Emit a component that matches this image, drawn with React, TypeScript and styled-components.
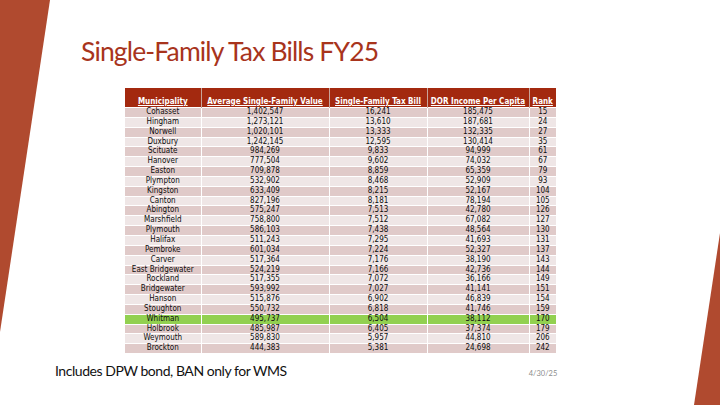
import React from "react";
import styled, { createGlobalStyle } from "styled-components";

const Global = createGlobalStyle`
  html, body { margin: 0; padding: 0; background: #ffffff; }
  body { width: 720px; height: 405px; overflow: hidden; }
`;

const Slide = styled.div`
  position: relative;
  width: 720px;
  height: 405px;
  background: #ffffff;
  overflow: hidden;
  font-family: "Lato", "Open Sans", sans-serif;
`;

const Deco = styled.svg`
  position: absolute;
  left: 0;
  top: 0;
  width: 720px;
  height: 405px;
  pointer-events: none;
`;

const Content = styled.div`
  position: relative;
  display: flex;
  flex-direction: column;
  padding: 35px 0 0 0;
  height: 100%;
  box-sizing: border-box;
`;

const Title = styled.h1`
  margin: 0 0 0 81px;
  font-family: "Lato", sans-serif;
  font-weight: 400;
  font-size: 26.5px;
  line-height: 33px;
  color: #a8341c;
  letter-spacing: -0.85px;
`;

const TableWrap = styled.div`
  margin: 20px 0 0 125px;
`;

const Table = styled.table`
  border-collapse: collapse;
  table-layout: fixed;
  width: 431px;
  font-family: "DejaVu Sans Condensed", "DejaVu Sans", sans-serif;
  font-size: 8px;
  color: #0d0d0d;
`;

const Th = styled.th`
  background: #a3290f;
  color: #ffffff;
  font-weight: 700;
  font-size: 8px;
  text-decoration: underline;
  text-underline-offset: 1px;
  height: 18px;
  padding: 0 0 1px 0;
  vertical-align: bottom;
  line-height: 8px;
  border-left: 1px solid #c9a49a;
  white-space: nowrap;
  overflow: visible;
  &:first-child { border-left: none; }
`;

const Tr = styled.tr<{ $shade: "dark" | "light" | "green" }>`
  background: ${(p) =>
    p.$shade === "green" ? "#92d050" : p.$shade === "dark" ? "#e0cac9" : "#efe6e6"};
`;

const Td = styled.td`
  height: 8.84px;
  padding: 0;
  line-height: 8.84px;
  text-align: center;
  border-top: 1px solid #ffffff;
  border-left: 1px solid #ffffff;
  white-space: nowrap;
  &:first-child { border-left: none; }
`;

const Footer = styled.div`
  display: flex;
  align-items: baseline;
  margin-top: auto;
  padding: 0 0 26px 55px;
`;

const Note = styled.div`
  font-family: "Lato", sans-serif;
  font-size: 14px;
  letter-spacing: -0.45px;
  color: #111111;
`;

const DateText = styled.div`
  margin-left: 242px;
  font-family: "Lato", sans-serif;
  font-size: 7.5px;
  color: #8c8c8c;
`;

const rows: [string, string, string, string, string][] = [
  ["Cohasset", "1,402,547", "16,241", "185,475", "15"],
  ["Hingham", "1,273,121", "13,610", "187,681", "24"],
  ["Norwell", "1,020,101", "13,333", "132,335", "27"],
  ["Duxbury", "1,242,145", "12,595", "130,414", "35"],
  ["Scituate", "984,269", "9,833", "94,999", "61"],
  ["Hanover", "777,504", "9,602", "74,032", "67"],
  ["Easton", "709,878", "8,859", "65,359", "79"],
  ["Plympton", "532,902", "8,468", "52,909", "93"],
  ["Kingston", "633,409", "8,215", "52,167", "104"],
  ["Canton", "827,196", "8,181", "78,194", "105"],
  ["Abington", "575,247", "7,513", "42,780", "126"],
  ["Marshfield", "758,800", "7,512", "67,082", "127"],
  ["Plymouth", "586,103", "7,438", "48,564", "130"],
  ["Halifax", "511,243", "7,295", "41,693", "131"],
  ["Pembroke", "601,034", "7,224", "52,327", "137"],
  ["Carver", "517,364", "7,176", "38,190", "143"],
  ["East Bridgewater", "524,219", "7,166", "42,736", "144"],
  ["Rockland", "517,355", "7,072", "36,166", "149"],
  ["Bridgewater", "593,992", "7,027", "41,141", "151"],
  ["Hanson", "515,876", "6,902", "46,839", "154"],
  ["Stoughton", "550,732", "6,818", "41,746", "159"],
  ["Whitman", "495,737", "6,504", "38,112", "170"],
  ["Holbrook", "485,987", "6,405", "37,374", "179"],
  ["Weymouth", "589,830", "5,957", "44,810", "206"],
  ["Brockton", "444,383", "5,381", "24,698", "242"],
];

const widths = [76, 128, 98, 102, 27];
const headers = [
  "Municipality",
  "Average Single-Family Value",
  "Single-Family Tax Bill",
  "DOR Income Per Capita",
  "Rank",
];

export default function App() {
  return (
    <Slide>
      <Global />
      <Deco viewBox="0 0 720 405">
        <polygon points="0,0 50,0 0,332" fill="#b04a2f" />
        <polygon points="720,233 720,405 694,405" fill="#b04a2f" />
      </Deco>
      <Content>
        <Title>Single-Family Tax Bills FY25</Title>
        <TableWrap>
          <Table>
            <colgroup>
              {widths.map((w, i) => (
                <col key={i} style={{ width: w }} />
              ))}
            </colgroup>
            <thead>
              <tr>
                {headers.map((h) => (
                  <Th key={h}>{h}</Th>
                ))}
              </tr>
            </thead>
            <tbody>
              {rows.map((r, i) => (
                <Tr
                  key={r[0]}
                  $shade={r[0] === "Whitman" ? "green" : i % 2 === 0 ? "dark" : "light"}
                >
                  {r.map((c, j) => (
                    <Td key={j}>{c}</Td>
                  ))}
                </Tr>
              ))}
            </tbody>
          </Table>
        </TableWrap>
        <Footer>
          <Note>Includes DPW bond, BAN only for WMS</Note>
          <DateText>4/30/25</DateText>
        </Footer>
      </Content>
    </Slide>
  );
}
